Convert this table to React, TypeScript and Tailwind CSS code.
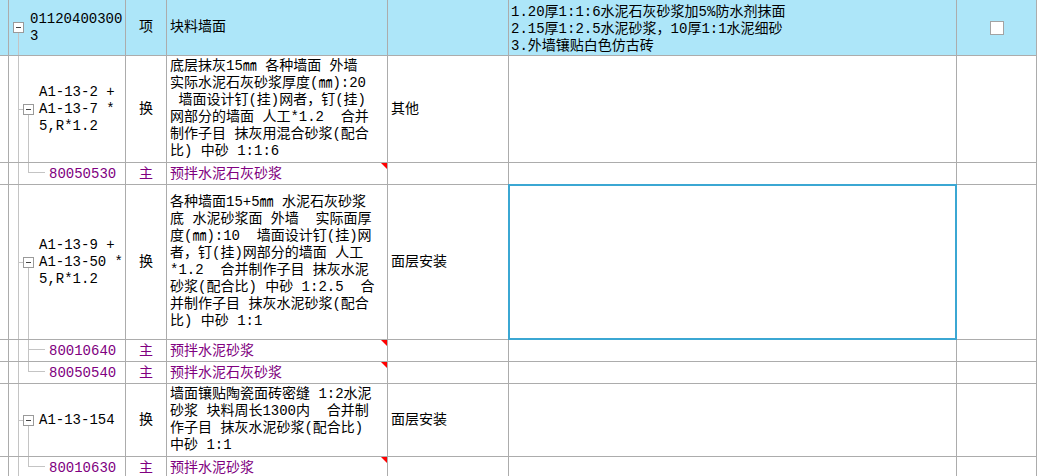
import React from 'react'

const line = 'border-r border-b border-[#acacac]'
const purple = 'text-[#800080]'

type Row = {
	kind: 'parent' | 'child'
	h: number
	code: string[]
	type: string
	name: string[]
	cat?: string
	last?: boolean
	selected?: boolean
}

const rows: Row[] = [
	{
		kind: 'parent',
		h: 107,
		code: ['A1-13-2 +', 'A1-13-7 *', '5,R*1.2'],
		type: '换',
		name: [
			'底层抹灰15㎜ 各种墙面 外墙',
			'实际水泥石灰砂浆厚度(㎜):20',
			' 墙面设计钉(挂)网者，钉(挂)',
			'网部分的墙面 人工*1.2  合并',
			'制作子目 抹灰用混合砂浆(配合',
			'比) 中砂 1:1:6',
		],
		cat: '其他',
	},
	{ kind: 'child', h: 22, code: ['80050530'], type: '主', name: ['预拌水泥石灰砂浆'], last: true },
	{
		kind: 'parent',
		h: 155,
		code: ['A1-13-9 +', 'A1-13-50 *', '5,R*1.2'],
		type: '换',
		name: [
			'各种墙面15+5㎜ 水泥石灰砂浆',
			'底 水泥砂浆面 外墙  实际面厚',
			'度(㎜):10  墙面设计钉(挂)网',
			'者，钉(挂)网部分的墙面 人工',
			'*1.2  合并制作子目 抹灰水泥',
			'砂浆(配合比) 中砂 1:2.5  合',
			'并制作子目 抹灰水泥砂浆(配合',
			'比) 中砂 1:1',
		],
		cat: '面层安装',
		selected: true,
	},
	{ kind: 'child', h: 22, code: ['80010640'], type: '主', name: ['预拌水泥砂浆'] },
	{ kind: 'child', h: 22, code: ['80050540'], type: '主', name: ['预拌水泥石灰砂浆'], last: true },
	{
		kind: 'parent',
		h: 73,
		code: ['A1-13-154'],
		type: '换',
		name: [
			'墙面镶贴陶瓷面砖密缝 1:2水泥',
			'砂浆 块料周长1300内  合并制',
			'作子目 抹灰水泥砂浆(配合比)',
			'中砂 1:1',
		],
		cat: '面层安装',
	},
	{ kind: 'child', h: 22, code: ['80010630'], type: '主', name: ['预拌水泥砂浆'], last: true },
]

function MinusBox({ x, y }: { x: number; y: number }) {
	return (
		<g>
			<rect x={x + 0.5} y={y + 0.5} width={10} height={10} fill="#fff" stroke="#9a9a9a" />
			<line x1={x + 3} y1={y + 5.5} x2={x + 8} y2={y + 5.5} stroke="#444" />
		</g>
	)
}

function Tree({ row }: { row: Row }) {
	const h = row.h - 1
	const cy = Math.round(h / 2)
	const g = '#c4c4c4'
	if (row.kind === 'parent') {
		return (
			<svg className="absolute inset-0" width={116} height={h}>
				<line x1={9.5} y1={0} x2={9.5} y2={h} stroke={g} />
				<line x1={9} y1={cy + 0.5} x2={14} y2={cy + 0.5} stroke={g} />
				<line x1={19.5} y1={cy + 5} x2={19.5} y2={h} stroke={g} />
				<MinusBox x={14} y={cy - 5} />
			</svg>
		)
	}
	return (
		<svg className="absolute inset-0" width={116} height={h}>
			<line x1={9.5} y1={0} x2={9.5} y2={h} stroke={g} />
			<line x1={19.5} y1={0} x2={19.5} y2={row.last ? 9 : h} stroke={g} />
			<line x1={19} y1={9.5} x2={36} y2={9.5} stroke={g} />
		</svg>
	)
}

export default function App() {
	return (
		<div className="w-[1038px] h-[476px] overflow-hidden bg-white text-black font-['Liberation_Mono','Noto_Sans_CJK_SC',monospace] text-[14px] leading-[17px]">
			<div className="grid grid-cols-[9px_117px_41px_221px_121px_448px_80px]">
				{/* header row */}
				<div className={`${line} h-[56px] bg-[#ade6f9]`} />
				<div className={`${line} h-[56px] bg-[#ade6f9] relative flex items-center pl-[21px]`}>
					<svg className="absolute inset-0" width={116} height={55}>
						<line x1={9.5} y1={33} x2={9.5} y2={55} stroke="#c4c4c4" />
						<MinusBox x={4} y={22} />
					</svg>
					<div className="relative">
						<div>01120400300</div>
						<div>3</div>
					</div>
				</div>
				<div className={`${line} h-[56px] bg-[#ade6f9] flex items-center justify-center`}>项</div>
				<div className={`${line} h-[56px] bg-[#ade6f9] flex items-center pl-[3px]`}>块料墙面</div>
				<div className={`${line} h-[56px] bg-[#ade6f9]`} />
				<div className={`${line} h-[56px] bg-[#ade6f9] flex flex-col justify-center pl-[2px] pt-[3px] whitespace-pre`}>
					<div>1.20厚1:1:6水泥石灰砂浆加5%防水剂抹面</div>
					<div>2.15厚1:2.5水泥砂浆，10厚1:1水泥细砂</div>
					<div>3.外墙镶贴白色仿古砖</div>
				</div>
				<div className={`${line} h-[56px] bg-[#ade6f9] flex items-center justify-center`}>
					<div className="w-[14px] h-[14px] bg-white border border-[#a3a3a3]" />
				</div>

				{rows.map((row, i) => {
					const child = row.kind === 'child'
					const hc = child ? 'h-[22px]' : row.h === 107 ? 'h-[107px]' : row.h === 155 ? 'h-[155px]' : 'h-[73px]'
					return (
						<React.Fragment key={i}>
							<div className={`${line} ${hc}`} />
							<div
								className={`${line} ${hc} relative flex items-center ${child ? 'pt-[2px] pl-[40px]' : 'pl-[30px]'}`}
							>
								<Tree row={row} />
								<div className={`relative whitespace-pre ${child ? purple : ''}`}>
									{row.code.map((c) => (
										<div key={c}>{c}</div>
									))}
								</div>
							</div>
							<div
								className={`${line} ${hc} flex items-center justify-center ${child ? `pt-[2px] ${purple}` : ''}`}
							>
								{row.type}
							</div>
							<div
								className={`${line} ${hc} relative flex items-center pl-[3px] whitespace-pre ${child ? `pt-[2px] ${purple}` : ''}`}
							>
								<div>
									{row.name.map((n, j) => (
										<div key={j}>{n}</div>
									))}
								</div>
								{child && (
									<div className="absolute right-0 top-0 w-0 h-0 border-l-[6px] border-l-transparent border-t-[6px] border-t-[#ff0000]" />
								)}
							</div>
							<div className={`${line} ${hc} flex items-center pl-[3px]`}>{row.cat}</div>
							<div className={`${line} ${hc} relative`}>
								{row.selected && (
									<div className="absolute -left-px -top-px -right-px -bottom-px border-2 border-[#3ba7d3]" />
								)}
							</div>
							<div className={`${line} ${hc}`} />
						</React.Fragment>
					)
				})}
			</div>
		</div>
	)
}
